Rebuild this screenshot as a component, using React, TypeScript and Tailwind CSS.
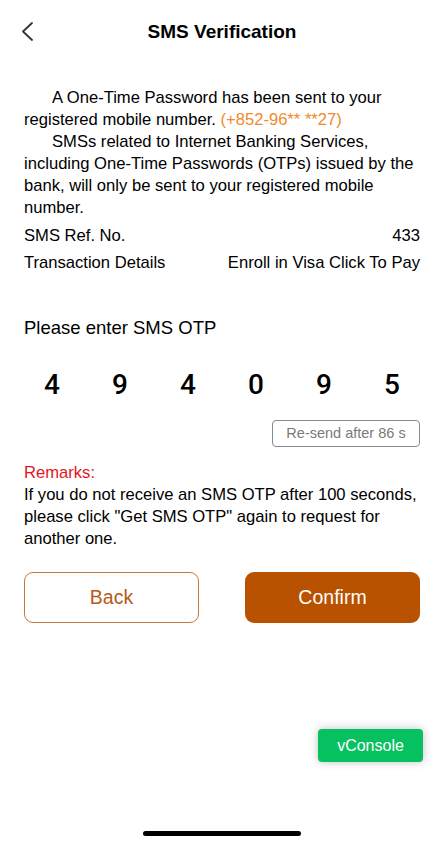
import React from "react";

export default function App() {
  const digits = ["4", "9", "4", "0", "9", "5"];
  return (
    <div
      className="relative h-[845px] w-[444px] overflow-hidden bg-white text-black"
      style={{ fontFamily: '"Liberation Sans", Arial, sans-serif' }}
    >
      {/* Header */}
      <div className="relative flex h-[62px] items-center justify-center">
        <svg
          className="absolute left-[20px] top-[21px]"
          width="14"
          height="20"
          viewBox="0 0 14 20"
          fill="none"
        >
          <path d="M12 2 L3 10.5 L12 19" stroke="#333" strokeWidth="1.8" strokeLinecap="round" strokeLinejoin="round" />
        </svg>
        <h1 className="text-[19px] font-bold leading-none">SMS Verification</h1>
      </div>

      <div className="px-[24px]">
        {/* Paragraph */}
        <div className="mt-[25px] text-[16.6px] leading-[22px]">
          <p className="indent-[28px]">
            A One-Time Password has been sent to your registered mobile number.{" "}
            <span className="text-[#f08a2c]">(+852-96** **27)</span>
          </p>
          <p className="indent-[28px]">
            SMSs related to Internet Banking Services, including One-Time Passwords (OTPs) issued by the bank, will only be sent to your registered mobile number.
          </p>
        </div>

        {/* Rows */}
        <div className="mt-[4px] text-[16.6px]">
          <div className="flex h-[27px] items-center justify-between">
            <span>SMS Ref. No.</span>
            <span>433</span>
          </div>
          <div className="flex h-[27px] items-center justify-between">
            <span>Transaction Details</span>
            <span>Enroll in Visa Click To Pay</span>
          </div>
        </div>

        {/* OTP */}
        <div className="mt-[39px] text-[18.5px] leading-[24px]">Please enter SMS OTP</div>
      </div>

      <div className="mx-[18px] mt-[28px] grid grid-cols-6">
        {digits.map((d, i) => (
          <div
            key={i}
            className="text-center text-[28px] font-medium leading-[34px]"
            style={{ fontFamily: 'Roboto, "DejaVu Sans", sans-serif' }}
          >
            {d}
          </div>
        ))}
      </div>

      <div className="px-[24px]">
        <div className="mt-[18px] flex justify-end">
          <div className="flex h-[27px] w-[148px] items-center justify-center rounded-[4px] border border-[#8a8a8a] text-[14.5px] text-[#7a7a7a]">
            Re-send after 86 s
          </div>
        </div>

        {/* Remarks */}
        <div className="mt-[15px] text-[16.6px] leading-[22px]">
          <div className="text-[#e5141c]">Remarks:</div>
          <div>
            If you do not receive an SMS OTP after 100 seconds, please click "Get SMS OTP" again to request for another one.
          </div>
        </div>

        {/* Buttons */}
        <div className="mt-[22px] flex justify-between">
          <button className="flex h-[51px] w-[175px] items-center justify-center rounded-[9px] border border-[#c4793c] bg-white text-[19.5px] text-[#b65a1a]">
            Back
          </button>
          <button className="flex h-[51px] w-[175px] items-center justify-center rounded-[9px] bg-[#b95200] text-[19.5px] text-white">
            Confirm
          </button>
        </div>
      </div>

      {/* vConsole */}
      <div className="absolute left-[318px] top-[729px] flex h-[33px] w-[105px] items-center justify-center rounded-[4px] bg-[#07c160] text-[16px] text-white shadow-[0_0_8px_rgba(0,0,0,0.25)]">
        vConsole
      </div>

      {/* Home indicator */}
      <div className="absolute left-[143px] top-[831px] h-[5px] w-[158px] rounded-full bg-black" />
    </div>
  );
}
